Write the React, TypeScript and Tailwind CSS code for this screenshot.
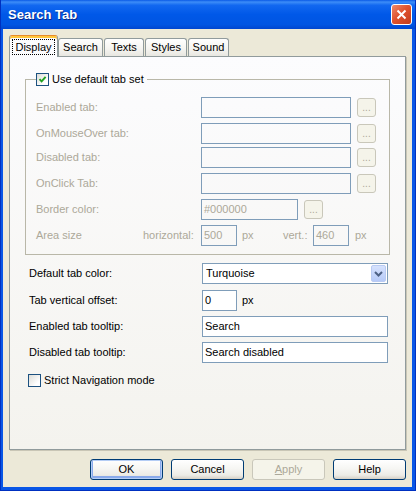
import React from "react";

const FONT = "font-['Liberation_Sans',Arial,sans-serif]";

type TabRow = { label: string; mt: string };

const tabRows: TabRow[] = [
    { label: "Enabled tab:", mt: "" },
    { label: "OnMouseOver tab:", mt: "mt-[5px]" },
    { label: "Disabled tab:", mt: "mt-[3px]" },
    { label: "OnClick Tab:", mt: "mt-[5px]" },
];

const tabs = [
    { name: "Search", w: "w-[45px]" },
    { name: "Texts", w: "w-[40px]" },
    { name: "Styles", w: "w-[42px]" },
    { name: "Sound", w: "w-[41px]" },
];

function Checkbox({ checked }: { checked?: boolean }) {
    return (
        <span className="flex h-[13px] w-[13px] shrink-0 items-center justify-center border border-[#1C5180] bg-[linear-gradient(135deg,#DCDCD7,#FFFFFF_75%)]">
            {checked && (
                <svg width="9" height="9" viewBox="0 0 9 9">
                    <path d="M1.5 4.2 L3.6 6.4 L7.6 1.8" fill="none" stroke="#21A121" strokeWidth="1.9" />
                </svg>
            )}
        </span>
    );
}

function DotsButton() {
    return (
        <span className="ml-[6px] flex h-[19px] w-[19px] items-end justify-center rounded-[3px] border border-[#C9C7BA] bg-[#F5F4EA] pb-[3px] text-[10px] leading-none text-[#ACA899]">
            ...
        </span>
    );
}

function DialogButton({
    children,
    primary,
    disabled,
}: {
    children: React.ReactNode;
    primary?: boolean;
    disabled?: boolean;
}) {
    if (disabled) {
        return (
            <span className="flex h-[21px] w-[73px] items-center justify-center rounded-[3px] border border-[#C9C7BA] bg-[#F5F4EA] text-[#ACA899]">
                {children}
            </span>
        );
    }
    return (
        <span
            className={`flex h-[21px] w-[73px] items-center justify-center rounded-[3px] border border-[#003C74] bg-[linear-gradient(180deg,#FFFFFF_0%,#F6F6F3_45%,#ECEBE6_80%,#D6D0C5_100%)] text-black ${
                primary ? "shadow-[inset_0_0_0_1px_#B4CDF5,inset_0_-1px_0_2px_#8AAAEB]" : ""
            }`}
        >
            {children}
        </span>
    );
}

export default function App() {
    return (
        <div className={`${FONT} flex h-[491px] w-[416px] flex-col border-x border-b border-[#0030C0] bg-[#0856E6] text-[11px] text-black`}>
            {/* title bar */}
            <div className="flex h-[29px] shrink-0 items-center justify-between bg-[linear-gradient(180deg,#0A5AE6_0%,#3D8DF8_7%,#1268F0_18%,#0058E8_50%,#0055E2_85%,#0046CF_100%)] pl-[7px] pr-[3px]">
                <span className="text-[13px] font-bold text-white [text-shadow:1px_1px_0_#0A2A8A]">Search Tab</span>
                <span className="flex h-[21px] w-[21px] items-center justify-center rounded-[3px] border border-white bg-[linear-gradient(135deg,#EE8A6C_0%,#E0532F_45%,#C43C1C_100%)]">
                    <svg width="11" height="11" viewBox="0 0 11 11">
                        <path d="M1.5 1.5 L9.5 9.5 M9.5 1.5 L1.5 9.5" stroke="#FFFFFF" strokeWidth="2" />
                    </svg>
                </span>
            </div>

            {/* client area */}
            <div className="ml-[2px] mr-[3px] mb-[3px] flex flex-1 flex-col bg-[#ECE9D8] px-[6px] pt-[6px]">
                {/* tabs */}
                <div className="flex items-end">
                    <div className="relative z-10 -mb-px flex h-[22px] w-[49px] rounded-t-[3px] border-x border-t border-x-[#919B9C] border-t-[#E68B2C] bg-[#FCFCFE] px-[2px] pt-[3px] pb-[2px] shadow-[inset_0_2px_0_#FFC73C]">
                        <span className="flex flex-1 items-center justify-center border border-dotted border-black">Display</span>
                    </div>
                    {tabs.map((t, i) => (
                        <div
                            key={t.name}
                            className={`flex h-[18px] ${t.w} ${i > 0 ? "ml-px" : ""} items-center justify-center rounded-t-[3px] border-x border-t border-[#919B9C] bg-[linear-gradient(180deg,#FFFFFF_0%,#F6F5F1_55%,#E8E7E1_100%)]`}
                        >
                            {t.name}
                        </div>
                    ))}
                </div>

                {/* tab panel */}
                <div className="flex h-[394px] flex-col border border-[#919B9C] bg-[linear-gradient(180deg,#FCFCFE,#F4F3EE)] shadow-[1px_1px_0_#C9C6B6]">
                    <fieldset className="mx-[15px] mt-[16px] border border-[#B9B7A8] pt-[11px] pb-[8px] pl-[10px]">
                        <legend className="flex h-[13px] items-center gap-[3px] pr-[3px]">
                            <Checkbox checked />
                            <span>Use default tab set</span>
                        </legend>

                        {tabRows.map((r) => (
                            <div key={r.label} className={`flex h-[21px] items-center ${r.mt}`}>
                                <span className="w-[165px] text-[#ACA899]">{r.label}</span>
                                <span className="h-full w-[150px] border border-[#7F9DB9]" />
                                <DotsButton />
                            </div>
                        ))}

                        <div className="mt-[5px] flex h-[21px] items-center">
                            <span className="w-[165px] text-[#ACA899]">Border color:</span>
                            <span className="flex h-full w-[97px] items-center border border-[#7F9DB9] pl-[2px] text-[#ACA899]">
                                #000000
                            </span>
                            <DotsButton />
                        </div>

                        <div className="mt-[5px] flex h-[21px] items-center text-[#ACA899]">
                            <span className="w-[107px]">Area size</span>
                            <span className="w-[58px]">horizontal:</span>
                            <span className="flex h-full w-[36px] items-center border border-[#7F9DB9] pl-[2px]">500</span>
                            <span className="ml-[5px] w-[41px]">px</span>
                            <span className="w-[30px]">vert.:</span>
                            <span className="flex h-full w-[36px] items-center border border-[#7F9DB9] pl-[2px]">460</span>
                            <span className="ml-[6px]">px</span>
                        </div>
                    </fieldset>

                    <div className="mt-[8px] flex flex-col pl-[19px]">
                        <div className="flex h-[21px] items-center">
                            <span className="w-[173px]">Default tab color:</span>
                            <span className="flex h-full w-[186px] items-center justify-between border border-[#7F9DB9] bg-white pl-[3px] pr-px">
                                <span>Turquoise</span>
                                <span className="flex h-[17px] w-[15px] items-center justify-center rounded-[2px] border border-[#B9CBF3] bg-[linear-gradient(180deg,#D6E2FD,#B6CAF8)]">
                                    <svg width="9" height="6" viewBox="0 0 9 6">
                                        <path d="M1 1 L4.5 4.5 L8 1" fill="none" stroke="#4D6185" strokeWidth="2" />
                                    </svg>
                                </span>
                            </span>
                        </div>
                        <div className="mt-[6px] flex h-[21px] items-center">
                            <span className="w-[173px]">Tab vertical offset:</span>
                            <span className="flex h-full w-[35px] items-center border border-[#7F9DB9] bg-white pl-[2px]">0</span>
                            <span className="ml-[5px]">px</span>
                        </div>
                        <div className="mt-[5px] flex h-[21px] items-center">
                            <span className="w-[173px]">Enabled tab tooltip:</span>
                            <span className="flex h-full w-[186px] items-center border border-[#7F9DB9] bg-white pl-[2px]">Search</span>
                        </div>
                        <div className="mt-[5px] flex h-[21px] items-center">
                            <span className="w-[173px]">Disabled tab tooltip:</span>
                            <span className="flex h-full w-[186px] items-center border border-[#7F9DB9] bg-white pl-[2px]">
                                Search disabled
                            </span>
                        </div>
                        <div className="mt-[9px] flex items-center gap-[3px] -ml-px">
                            <Checkbox />
                            <span>Strict Navigation mode</span>
                        </div>
                    </div>
                </div>

                {/* buttons */}
                <div className="mt-[9px] flex justify-end gap-[8px]">
                    <DialogButton primary>OK</DialogButton>
                    <DialogButton>Cancel</DialogButton>
                    <DialogButton disabled>
                        <span>
                            <span className="underline">A</span>pply
                        </span>
                    </DialogButton>
                    <DialogButton>Help</DialogButton>
                </div>
            </div>
        </div>
    );
}
